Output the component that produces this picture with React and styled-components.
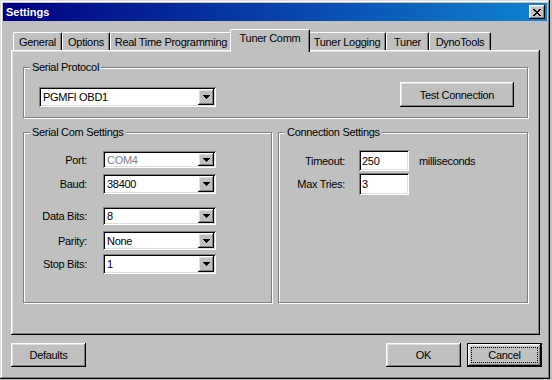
import styled, { createGlobalStyle, css } from 'styled-components'

const GlobalStyle = createGlobalStyle`
  body {
    margin: 0;
    background: #c0c0c0;
    font-family: "Liberation Sans", Arial, sans-serif;
    font-size: 11px;
    letter-spacing: -0.3px;
    color: #000;
  }
`

const raised = css`
  box-shadow: inset -1px -1px #000, inset 1px 1px #fff, inset -2px -2px #808080, inset 2px 2px #dfdfdf;
`

const sunken = css`
  box-shadow: inset 1px 1px #808080, inset -1px -1px #fff, inset 2px 2px #000, inset -2px -2px #dfdfdf;
`

const Window = styled.div`
  display: flex;
  flex-direction: column;
  box-sizing: border-box;
  width: 550px;
  height: 379px;
  padding: 3px;
  background: #c0c0c0;
  box-shadow: inset -1px -1px #000, inset 1px 1px #dfdfdf, inset -2px -2px #808080, inset 2px 2px #fff;
`

const TitleBar = styled.div`
  display: flex;
  align-items: center;
  height: 18px;
  padding: 0 2px;
  background: linear-gradient(to right, #000080, #1084d0);
  color: #fff;
  font-weight: bold;
  font-size: 11px;
  letter-spacing: 0;
`

const Title = styled.span`
  flex: 1;
  padding-left: 1px;
`

const CloseButton = styled.div`
  display: flex;
  align-items: center;
  justify-content: center;
  width: 16px;
  height: 14px;
  background: #c0c0c0;
  ${raised};
`

const Content = styled.div`
  display: flex;
  flex-direction: column;
  padding: 8px 7px 0 8px;
`

const TabStrip = styled.div`
  display: flex;
  align-items: flex-end;
  height: 21px;
  padding-left: 2px;
`

const Tab = styled.div`
  box-sizing: border-box;
  width: ${p => p.$width}px;
  height: 18px;
  padding-top: 2px;
  line-height: 14px;
  text-align: center;
  white-space: nowrap;
  background: #c0c0c0;
  border-top: 1px solid #fff;
  border-left: 1px solid #fff;
  border-right: 1px solid #000;
  border-radius: 2px 2px 0 0;
  box-shadow: inset -1px 0 #808080;

  ${p => p.$active && css`
    position: relative;
    z-index: 1;
    width: ${p.$width + 4}px;
    height: 23px;
    margin: 0 -2px -2px;
    padding-top: 1px;
  `}
`

const Panel = styled.div`
  display: flex;
  flex-direction: column;
  height: 285px;
  padding: 17px 12px 0;
  box-sizing: border-box;
  ${raised};
`

const Group = styled.div`
  position: relative;
  box-sizing: border-box;
  height: ${p => p.$height}px;
  border: 1px solid #808080;
  box-shadow: inset 1px 1px #fff, 1px 1px #fff;
`

const Caption = styled.span`
  position: absolute;
  top: -7px;
  left: 6px;
  padding: 0 2px;
  line-height: 13px;
  background: #c0c0c0;
`

const ProtocolBody = styled.div`
  display: flex;
  justify-content: space-between;
  align-items: flex-start;
  padding: 14px 13px 0 15px;
`

const ComboSlot = styled.div`
  margin-top: 5px;
`

const GroupRow = styled.div`
  display: grid;
  grid-template-columns: 249px 1fr;
  column-gap: 6px;
  margin-top: 14px;
`

const Form = styled.div`
  display: flex;
  flex-direction: column;
  padding-top: ${p => p.$top}px;
`

const FieldRow = styled.div`
  display: flex;
  align-items: center;
  margin-top: ${p => p.$gap || 0}px;
`

const Label = styled.span`
  width: ${p => p.$width}px;
  margin-right: ${p => p.$space}px;
  text-align: right;
  white-space: nowrap;
`

const ComboBox = styled.div`
  display: flex;
  align-items: center;
  box-sizing: border-box;
  width: ${p => p.$width}px;
  height: ${p => p.$height}px;
  padding: 2px 2px 2px 4px;
  background: #fff;
  color: ${p => (p.$disabled ? '#808080' : '#000')};
  ${sunken};
`

const ComboText = styled.span`
  flex: 1;
  white-space: nowrap;
`

const DropButton = styled.div`
  display: flex;
  align-items: center;
  justify-content: center;
  align-self: stretch;
  width: 16px;
  background: #c0c0c0;
  ${raised};
`

const TextBox = styled.div`
  display: flex;
  align-items: center;
  box-sizing: border-box;
  width: 50px;
  height: ${p => p.$height}px;
  padding: 0 3px;
  background: #fff;
  ${sunken};
`

const Suffix = styled.span`
  margin-left: 10px;
`

const Button = styled.button`
  position: relative;
  box-sizing: border-box;
  width: ${p => p.$width}px;
  height: ${p => p.$height}px;
  padding: 0;
  border: none;
  background: #c0c0c0;
  font: inherit;
  letter-spacing: inherit;
  color: #000;
  ${raised};

  ${p => p.$default && css`
    border: 1px solid #000;
    &::after {
      content: '';
      position: absolute;
      inset: 3px;
      border: 1px dotted #000;
    }
  `}
`

const Footer = styled.div`
  display: flex;
  align-items: center;
  gap: 6px;
  margin: 8px -2px 0 0;
`

const Spacer = styled.div`
  flex: 1;
`

const CloseGlyph = () => (
  <svg width="8" height="7" viewBox="0 0 8 7" shapeRendering="crispEdges">
    <path
      fill="#000"
      d="M0 0h2v1H0zM6 0h2v1H6zM1 1h2v1H1zM5 1h2v1H5zM2 2h4v1H2zM3 3h2v1H3zM2 4h4v1H2zM1 5h2v1H1zM5 5h2v1H5zM0 6h2v1H0zM6 6h2v1H6z"
    />
  </svg>
)

const Arrow = () => (
  <svg width="7" height="4" viewBox="0 0 7 4" shapeRendering="crispEdges">
    <path fill="#000" d="M0 0h7v1H0zM1 1h5v1H1zM2 2h3v1H2zM3 3h1v1H3z" />
  </svg>
)

const Combo = ({ value, width = 113, height = 20, disabled }) => (
  <ComboBox $width={width} $height={height} $disabled={disabled}>
    <ComboText>{value}</ComboText>
    <DropButton>
      <Arrow />
    </DropButton>
  </ComboBox>
)

const tabs = [
  { name: 'General', width: 49 },
  { name: 'Options', width: 48 },
  { name: 'Real Time Programming', width: 122 },
  { name: 'Tuner Comm', width: 76 },
  { name: 'Tuner Logging', width: 78 },
  { name: 'Tuner', width: 43 },
  { name: 'DynoTools', width: 62 },
]

const serialRows = [
  { label: 'Port:', value: 'COM4', height: 17, gap: 0, disabled: true },
  { label: 'Baud:', value: '38400', height: 20, gap: 6 },
  { label: 'Data Bits:', value: '8', height: 18, gap: 13 },
  { label: 'Parity:', value: 'None', height: 19, gap: 6 },
  { label: 'Stop Bits:', value: '1', height: 20, gap: 4 },
]

export default function App() {
  return (
    <>
      <GlobalStyle />
      <Window>
        <TitleBar>
          <Title>Settings</Title>
          <CloseButton>
            <CloseGlyph />
          </CloseButton>
        </TitleBar>
        <Content>
          <TabStrip>
            {tabs.map(t => (
              <Tab key={t.name} $width={t.width} $active={t.name === 'Tuner Comm'}>
                {t.name}
              </Tab>
            ))}
          </TabStrip>
          <Panel>
            <Group $height={51}>
              <Caption>Serial Protocol</Caption>
              <ProtocolBody>
                <ComboSlot>
                  <Combo value="PGMFI OBD1" width={177} height={20} />
                </ComboSlot>
                <Button $width={114} $height={25}>Test Connection</Button>
              </ProtocolBody>
            </Group>
            <GroupRow>
              <Group $height={171}>
                <Caption>Serial Com Settings</Caption>
                <Form $top={18}>
                  {serialRows.map(r => (
                    <FieldRow key={r.label} $gap={r.gap}>
                      <Label $width={63} $space={16}>{r.label}</Label>
                      <Combo value={r.value} height={r.height} disabled={r.disabled} />
                    </FieldRow>
                  ))}
                </Form>
              </Group>
              <Group $height={171}>
                <Caption>Connection Settings</Caption>
                <Form $top={17}>
                  <FieldRow>
                    <Label $width={66} $space={14}>Timeout:</Label>
                    <TextBox $height={21}>250</TextBox>
                    <Suffix>milliseconds</Suffix>
                  </FieldRow>
                  <FieldRow $gap={2}>
                    <Label $width={66} $space={14}>Max Tries:</Label>
                    <TextBox $height={22}>3</TextBox>
                  </FieldRow>
                </Form>
              </Group>
            </GroupRow>
          </Panel>
          <Footer>
            <Button $width={75} $height={24}>Defaults</Button>
            <Spacer />
            <Button $width={75} $height={24}>OK</Button>
            <Button $width={75} $height={24} $default>Cancel</Button>
          </Footer>
        </Content>
      </Window>
    </>
  )
}
